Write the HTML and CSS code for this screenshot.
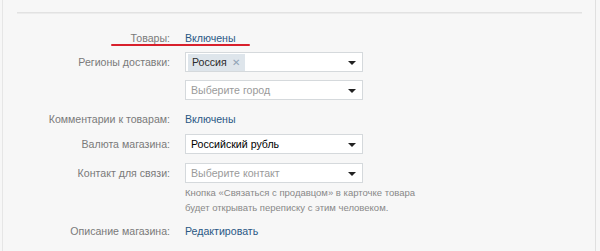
FILE: index.html
```html
<!DOCTYPE html>
<html lang="ru">
<head>
    <meta charset="UTF-8">
    <title>Настройки товаров</title>
    <link rel="stylesheet" href="styles.css">
</head>
<body>
    <div class="page">
        <div class="divider"></div>

        <div class="form">
            <div class="row row-main">
                <div class="label">Товары:</div>
                <div class="value"><a class="link">Включены</a></div>
                <div class="underline"></div>
            </div>

            <div class="row row-select">
                <div class="label">Регионы доставки:</div>
                <div class="value">
                    <div class="select">
                        <span class="token">Россия <span class="token-x">✕</span></span>
                        <span class="arrow"></span>
                    </div>
                </div>
            </div>

            <div class="row row-city">
                <div class="label"></div>
                <div class="value">
                    <div class="select">
                        <span class="placeholder">Выберите город</span>
                        <span class="arrow"></span>
                    </div>
                </div>
            </div>

            <div class="row row-text">
                <div class="label">Комментарии к товарам:</div>
                <div class="value"><a class="link">Включены</a></div>
            </div>

            <div class="row row-currency">
                <div class="label">Валюта магазина:</div>
                <div class="value">
                    <div class="select">
                        <span class="selected">Российский рубль</span>
                        <span class="arrow"></span>
                    </div>
                </div>
            </div>

            <div class="row row-contact">
                <div class="label">Контакт для связи:</div>
                <div class="value">
                    <div class="select">
                        <span class="placeholder">Выберите контакт</span>
                        <span class="arrow"></span>
                    </div>
                    <div class="hint">Кнопка «Связаться с продавцом» в карточке товара<br>будет открывать переписку с этим человеком.</div>
                </div>
            </div>

            <div class="row row-text">
                <div class="label">Описание магазина:</div>
                <div class="value"><a class="link">Редактировать</a></div>
            </div>
        </div>
    </div>
</body>
</html>
```

FILE: styles.css
```css
body {
    margin: 0;
    background-color: #f7f7f7;
    font-family: "Liberation Sans", Arial, sans-serif;
    font-size: 10.6px;
    color: #000;
}
.page {
    width: 594px;
    height: 251px;
    box-sizing: border-box;
    margin-left: 2px;
    padding: 12px 13px 0 14px;
    border-left: 1px solid #e6e6e6;
    border-right: 1px solid #e0e0e0;
    background-color: #f7f7f7;
}
.divider {
    height: 1px;
    background-color: #e2e2e2;
    border-bottom: 1px solid #ececec;
}
.form {
    padding-top: 14px;
}
.row {
    display: grid;
    grid-template-columns: 153px 1fr;
    column-gap: 15px;
    align-items: start;
}
.row-main {
    position: relative;
    margin-bottom: 4px;
}
.row-select {
    margin-bottom: 8px;
}
.row-city {
    margin-bottom: 10px;
}
.row-text {
    margin-bottom: 6px;
}
.row-currency {
    margin-bottom: 9px;
}
.row-contact {
    margin-bottom: 7px;
}
.label {
    text-align: right;
    color: #7a7a7a;
    line-height: 20px;
}
.value {
    line-height: 20px;
}
.link {
    color: #2a5885;
    text-decoration: none;
}
.underline {
    position: absolute;
    left: 94px;
    top: 16px;
    width: 139px;
    height: 2px;
    border-radius: 1px;
    background-color: #d8202c;
}
.select {
    position: relative;
    width: 178px;
    height: 20px;
    box-sizing: border-box;
    border: 1px solid #d5d9dc;
    background-color: #fff;
    padding: 0 20px 0 2px;
    display: flex;
    align-items: center;
    line-height: 18px;
}
.placeholder {
    color: #9a9a9a;
    padding-left: 3px;
}
.selected {
    padding-left: 3px;
}
.token {
    background-color: #dee5eb;
    color: #2b2b2b;
    padding: 0 5px 0 4px;
    line-height: 16px;
}
.token-x {
    color: #8fa3b6;
    font-size: 10px;
    margin-left: 2px;
}
.arrow {
    position: absolute;
    right: 6px;
    top: 8px;
    border-left: 4px solid transparent;
    border-right: 4px solid transparent;
    border-top: 4px solid #222;
}
.row-text .label,
.row-text .value {
    line-height: 18px;
}
.hint {
    color: #888;
    font-size: 9.5px;
    line-height: 15px;
    margin-top: 2px;
}
```
